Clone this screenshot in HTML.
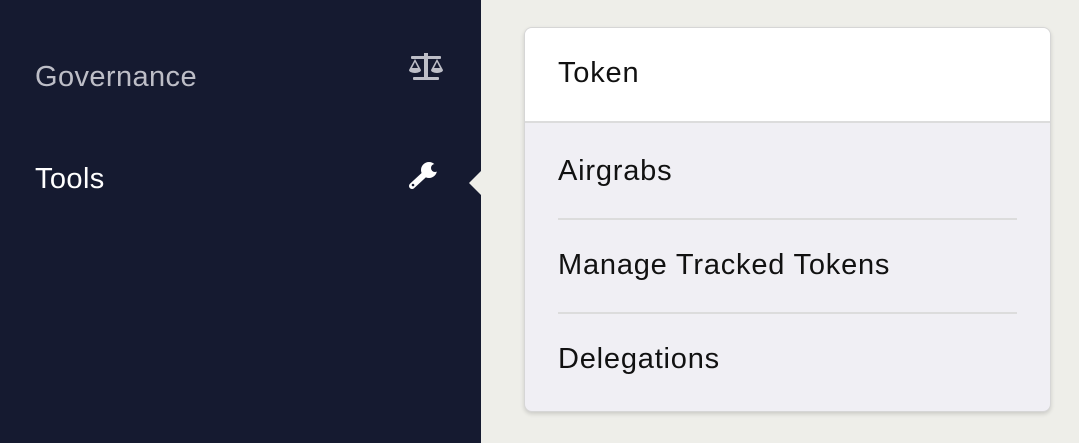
<!DOCTYPE html>
<html><head><style>
body{margin:0;width:1079px;height:443px;background:#eeeee9;font-family:"Liberation Sans",sans-serif;position:relative;overflow:hidden}
.side{position:absolute;left:0;top:0;width:481px;height:443px;background:#151a30}
.nav{position:absolute;left:35px;font-size:29px;letter-spacing:0.4px}
.arrow{position:absolute;left:469px;top:170px;width:0;height:0;border-top:13px solid transparent;border-bottom:13px solid transparent;border-right:13px solid #eeeee9}
.panel{position:absolute;left:524px;top:27px;width:525px;height:383px;background:#f0eff4;border:1px solid #d6d6d6;border-radius:8px;box-shadow:0 2px 4px rgba(0,0,0,.15);overflow:hidden}
.hd{height:93px;background:#fff;border-bottom:2px solid #dcdcdc}
.it{position:absolute;left:33px;font-size:29px;letter-spacing:0.8px;color:#111}
.sep{position:absolute;left:33px;width:459px;height:2px;background:#dcdcdc}
</style></head><body>
<div class="side">
<div class="nav" style="top:61px;color:#bdbec7">Governance</div>
<div class="nav" style="top:163px;color:#fff">Tools</div>
<svg style="position:absolute;left:405px;top:53px" width="42" height="30" viewBox="0 0 42 30" fill="#bdbec7">
<rect x="19" y="0" width="4" height="26"/><rect x="8" y="24" width="26" height="3" rx="1"/><rect x="6" y="3" width="30" height="3" rx="1"/>
<path d="M10 6 L4 17 h12 Z M10 9 L7 15 h6 Z" fill-rule="evenodd"/><path d="M4 17 h12 a6 3 0 0 1 -12 0Z"/>
<path d="M32 6 L26 17 h12 Z M32 9 L29 15 h6 Z" fill-rule="evenodd"/><path d="M26 17 h12 a6 3 0 0 1 -12 0Z"/>
</svg>
<svg style="position:absolute;left:408px;top:160px" width="34" height="30" viewBox="0 0 34 30">
<path d="M4 26 L17 14" stroke="#fff" stroke-width="6" stroke-linecap="round"/>
<circle cx="21" cy="10" r="8" fill="#fff"/><circle cx="27" cy="8" r="4" fill="#151a30"/>
<circle cx="5" cy="25" r="1.3" fill="#151a30"/>
</svg>
<div class="arrow"></div>
</div>
<div class="panel">
<div class="hd"></div>
<div class="it" style="top:29px">Token</div>
<div class="it" style="top:127px">Airgrabs</div>
<div class="sep" style="top:190px"></div>
<div class="it" style="top:221px">Manage Tracked Tokens</div>
<div class="sep" style="top:284px"></div>
<div class="it" style="top:315px">Delegations</div>
</div>
</body></html>
